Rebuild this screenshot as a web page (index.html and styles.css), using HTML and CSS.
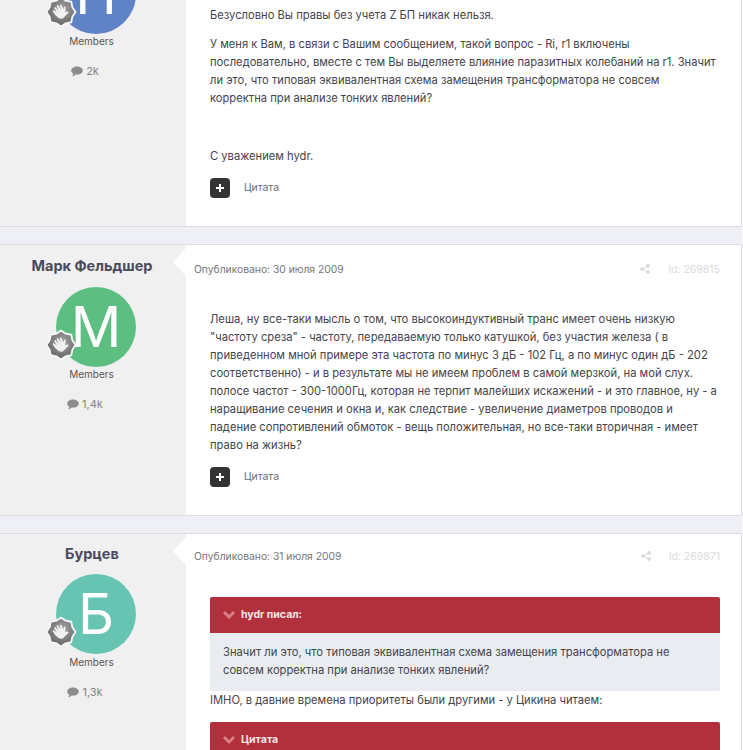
FILE: index.html
```html
<!DOCTYPE html>
<html lang="ru">
<head>
  <meta charset="UTF-8">
  <title>Форум</title>
  <link rel="stylesheet" href="styles.css">
</head>
<body>
  <div class="feed">

    <!-- first post, cut by the top of the window -->
    <article class="post post-cut">
      <aside class="author">
        <div class="avatar av-blue"><span class="letter">Н</span>
          <svg class="badge" viewBox="0 0 32 32"><use href="#rank"/></svg>
        </div>
        <div class="group">Members</div>
        <div class="count"><svg class="bubble" viewBox="0 0 12 11"><use href="#talk"/></svg>2k</div>
      </aside>
      <div class="main">
        <div class="body">
          <p>Безусловно Вы правы без учета Z БП никак нельзя.</p>
          <p>У меня к Вам, в связи с Вашим сообщением, такой вопрос - Ri, r1 включены<br>последовательно, вместе с тем Вы выделяете влияние паразитных колебаний на r1. Значит<br>ли это, что типовая эквивалентная схема замещения трансформатора не совсем<br>корректна при анализе тонких явлений?</p>
          <p class="sign">С уважением hydr.</p>
        </div>
        <div class="actions">
          <span class="plus"><svg viewBox="0 0 10 10"><path d="M4 1h2v3h3v2H6v3H4V6H1V4h3z"/></svg></span>
          <span class="quote-link">Цитата</span>
        </div>
      </div>
    </article>

    <article class="post post-2">
      <aside class="author">
        <h3 class="name">Марк Фельдшер</h3>
        <div class="avatar av-green"><span class="letter">М</span>
          <svg class="badge" viewBox="0 0 32 32"><use href="#rank"/></svg>
        </div>
        <div class="group">Members</div>
        <div class="count"><svg class="bubble" viewBox="0 0 12 11"><use href="#talk"/></svg>1,4k</div>
      </aside>
      <div class="main">
        <div class="meta">
          <span>Опубликовано: 30 июля 2009</span>
          <span class="meta-right">
            <svg class="share" viewBox="0 0 10 10"><use href="#share"/></svg>
            <span class="post-id">Id: 269815</span>
          </span>
        </div>
        <div class="body">
          <p>Леша, ну все-таки мысль о том, что высокоиндуктивный транс имеет очень низкую<br>"частоту среза" - частоту, передаваемую только катушкой, без участия железа ( в<br>приведенном мной примере эта частота по минус 3 дБ - 102 Гц, а по минус один дБ - 202<br>соответственно) - и в результате мы не имеем проблем в самой мерзкой, на мой слух.<br>полосе частот - 300-1000Гц, которая не терпит малейших искажений - и это главное, ну - а<br>наращивание сечения и окна и, как следствие - увеличение диаметров проводов и<br>падение сопротивлений обмоток - вещь положительная, но все-таки вторичная - имеет<br>право на жизнь?</p>
        </div>
        <div class="actions">
          <span class="plus"><svg viewBox="0 0 10 10"><path d="M4 1h2v3h3v2H6v3H4V6H1V4h3z"/></svg></span>
          <span class="quote-link">Цитата</span>
        </div>
      </div>
    </article>

    <article class="post post-3">
      <aside class="author">
        <h3 class="name">Бурцев</h3>
        <div class="avatar av-teal"><span class="letter">Б</span>
          <svg class="badge" viewBox="0 0 32 32"><use href="#rank"/></svg>
        </div>
        <div class="group">Members</div>
        <div class="count"><svg class="bubble" viewBox="0 0 12 11"><use href="#talk"/></svg>1,3k</div>
      </aside>
      <div class="main">
        <div class="meta">
          <span>Опубликовано: 31 июля 2009</span>
          <span class="meta-right">
            <svg class="share" viewBox="0 0 10 10"><use href="#share"/></svg>
            <span class="post-id">Id: 269871</span>
          </span>
        </div>
        <div class="body">
          <blockquote class="quote">
            <div class="quote-head"><svg class="chev" viewBox="0 0 12 8"><path d="M0 2l2-2 4 4 4-4 2 2-6 6z"/></svg>hydr писал:</div>
            <div class="quote-text">Значит ли это, что типовая эквивалентная схема замещения трансформатора не<br>совсем корректна при анализе тонких явлений?</div>
          </blockquote>
          <p class="after-quote">IMHO, в давние времена приоритеты были другими - у Цикина читаем:</p>
          <blockquote class="quote">
            <div class="quote-head"><svg class="chev" viewBox="0 0 12 8"><path d="M0 2l2-2 4 4 4-4 2 2-6 6z"/></svg>Цитата</div>
          </blockquote>
        </div>
      </div>
    </article>
  </div>

  <!-- shared icons -->
  <svg class="defs" width="0" height="0">
    <defs>
      <radialGradient id="rankFill" cx="0.55" cy="0.4" r="0.7">
        <stop offset="0" stop-color="#a2a2a2"/>
        <stop offset="1" stop-color="#5c5c5c"/>
      </radialGradient>
      <g id="rank">
        <path fill="url(#rankFill)" stroke="#f7f7f7" stroke-width="1.800" stroke-linejoin="round" d="M16 1.500L20.700 4.640 26.250 5.750 27.360 11.300 30.500 16 27.360 20.700 26.250 26.250 20.700 27.360 16 30.500 11.300 27.360 5.750 26.250 4.640 20.700 1.500 16 4.640 11.300 5.750 5.750 11.300 4.640z"/>
        <path fill="#f1f1f1" d="M7.500 15l1.300-1 3.200 2.400-3-4.400 1.400-1 3.300 3.800-2.200-5 1.500-.8 2.800 4.600-1-4.600 1.500-.4 2 5 .8-3 1.500.3-.2 5.400 2.500-1 .8 1.200-3.400 3.600-2.800 2.700-3.600-.6-3.500-3z"/>
      </g>
      <path id="talk" fill="#8c8c8c" d="M6 .5c3.200 0 5.800 1.800 5.800 4.100S9.200 8.700 6 8.700c-.5 0-1 0-1.400-.1C3.700 9.500 2.400 10.200 1 10.400c.7-.8 1.200-1.700 1.300-2.600C1 7 .2 5.900.2 4.600.2 2.300 2.800.5 6 .5z"/>
      <g id="share" fill="#d8d8d8">
        <circle cx="2" cy="5" r="1.800"/><circle cx="8" cy="1.900" r="1.800"/><circle cx="8" cy="8.100" r="1.800"/>
        <path d="M2 4.500l6-3v1l-6 3zM2 4.500l6 3v1l-6-3z"/>
      </g>
    </defs>
  </svg>
</body>
</html>
```

FILE: styles.css
```css
html, body {
  margin: 0;
  padding: 0;
}

body {
  background-color: #fbfbfd;
  color: #44444c;
  font-family: Inter, "Noto Sans", sans-serif;
  font-size: 11.2px;
  height: 750px;
  overflow: hidden;
}

.defs {
  position: absolute;
}

.feed {
  display: flex;
  flex-direction: column;
  gap: 17px;
  margin-right: 1px;
  background: #eff0f6;
}

/* ====== POST ====== */
.post {
  display: flex;
  background: #fff;
  border-bottom: 1px solid #dcdde4;
  border-top: 1px solid #dcdde4;
  border-right: 1px solid #dcdde4;
}

.post-cut {
  border-top: 0;
  margin-top: -72px;
  height: 298px;
}

.post-2 {
  height: 270px;
}

.post-3 {
  height: 300px;
}

.author {
  width: 186px;
  flex: none;
  background: #f0f0f0;
  display: flex;
  flex-direction: column;
  align-items: center;
  padding-top: 11px;
  box-sizing: border-box;
}

.post-cut .author {
  padding-top: 26px;
}

.post-3 .author {
  padding-top: 10px;
}

.name {
  margin: 0 0 11px;
  font-size: 14.5px;
  line-height: 20px;
  font-weight: 700;
  color: #4a4a5e;
  position: relative;
  left: -1px;
}

.post-3 .name {
  margin-bottom: 10px;
}

.avatar {
  width: 80px;
  height: 80px;
  border-radius: 50%;
  position: relative;
  color: #fff;
  display: flex;
  align-items: center;
  justify-content: center;
  left: 3px;
}

.letter {
  font-size: 56px;
  line-height: 1;
}

.av-blue { background: #5f83c6; }
.av-green { background: #5dbe82; }
.av-teal { background: #67c4b3; }

.badge {
  position: absolute;
  left: -11px;
  bottom: 6px;
  width: 32px;
  height: 32px;
}

.group {
  font-size: 10px;
  line-height: 14px;
  color: #55555c;
  position: relative;
  left: -1.500px;
}

.post-3 .group {
  margin-top: 1px;
}

.count {
  margin-top: 16px;
  font-size: 11px;
  line-height: 14px;
  color: #84848a;
  display: flex;
  align-items: center;
  gap: 3px;
  position: relative;
  left: -8px;
}

.bubble {
  width: 12px;
  height: 11px;
}

/* ====== MAIN COLUMN ====== */
.main {
  flex: 1;
  min-width: 0;
  position: relative;
  padding: 0 21px 0 24px;
  display: flex;
  flex-direction: column;
}

/* arrow that points from the post to its author */
.main::before {
  content: "";
  position: absolute;
  left: -13px;
  top: 3px;
  border-style: solid;
  border-width: 14px 13px 14px 0;
  border-color: transparent #fff transparent transparent;
}

.post-cut .main::before {
  display: none;
}

.meta {
  display: flex;
  justify-content: space-between;
  align-items: center;
  margin-left: -16px;
  height: 14px;
  margin-top: 17px;
  font-size: 10.300px;
  color: #75757b;
}

.post-3 .meta {
  margin-top: 15px;
}

.meta-right {
  display: flex;
  align-items: center;
  gap: 18px;
  color: #dadadd;
  font-size: 10.500px;
}

.share {
  width: 10px;
  height: 10px;
}

.body {
  line-height: 18px;
  margin-top: 34px;
}

.post-cut .body {
  margin-top: 78px;
}

.body p {
  margin: 0 0 11px;
}

.body .sign {
  padding-top: 29px;
}

.actions {
  display: flex;
  align-items: center;
  gap: 14px;
  margin-top: 1.500px;
}

.plus {
  width: 20px;
  height: 20px;
  border-radius: 4px;
  background: #333336;
  display: flex;
  align-items: center;
  justify-content: center;
}

.plus svg {
  width: 10px;
  height: 10px;
  fill: #fff;
}

.quote-link {
  font-size: 10.400px;
  color: #6b6b72;
}

/* ====== QUOTES ====== */
.quote {
  margin: 0;
  border-radius: 2px;
  overflow: hidden;
  background: #e9edf2;
}

.quote-head {
  background: #b2303b;
  color: #f5e6e6;
  height: 36px;
  display: flex;
  align-items: center;
  gap: 6px;
  padding-left: 13px;
  font-size: 10.500px;
  font-weight: 700;
}

.chev {
  width: 12px;
  height: 8px;
  fill: #d98088;
}

.quote-text {
  padding: 10px 13px 12px;
}

.body .after-quote {
  margin: 0 0 13px;
}
```
